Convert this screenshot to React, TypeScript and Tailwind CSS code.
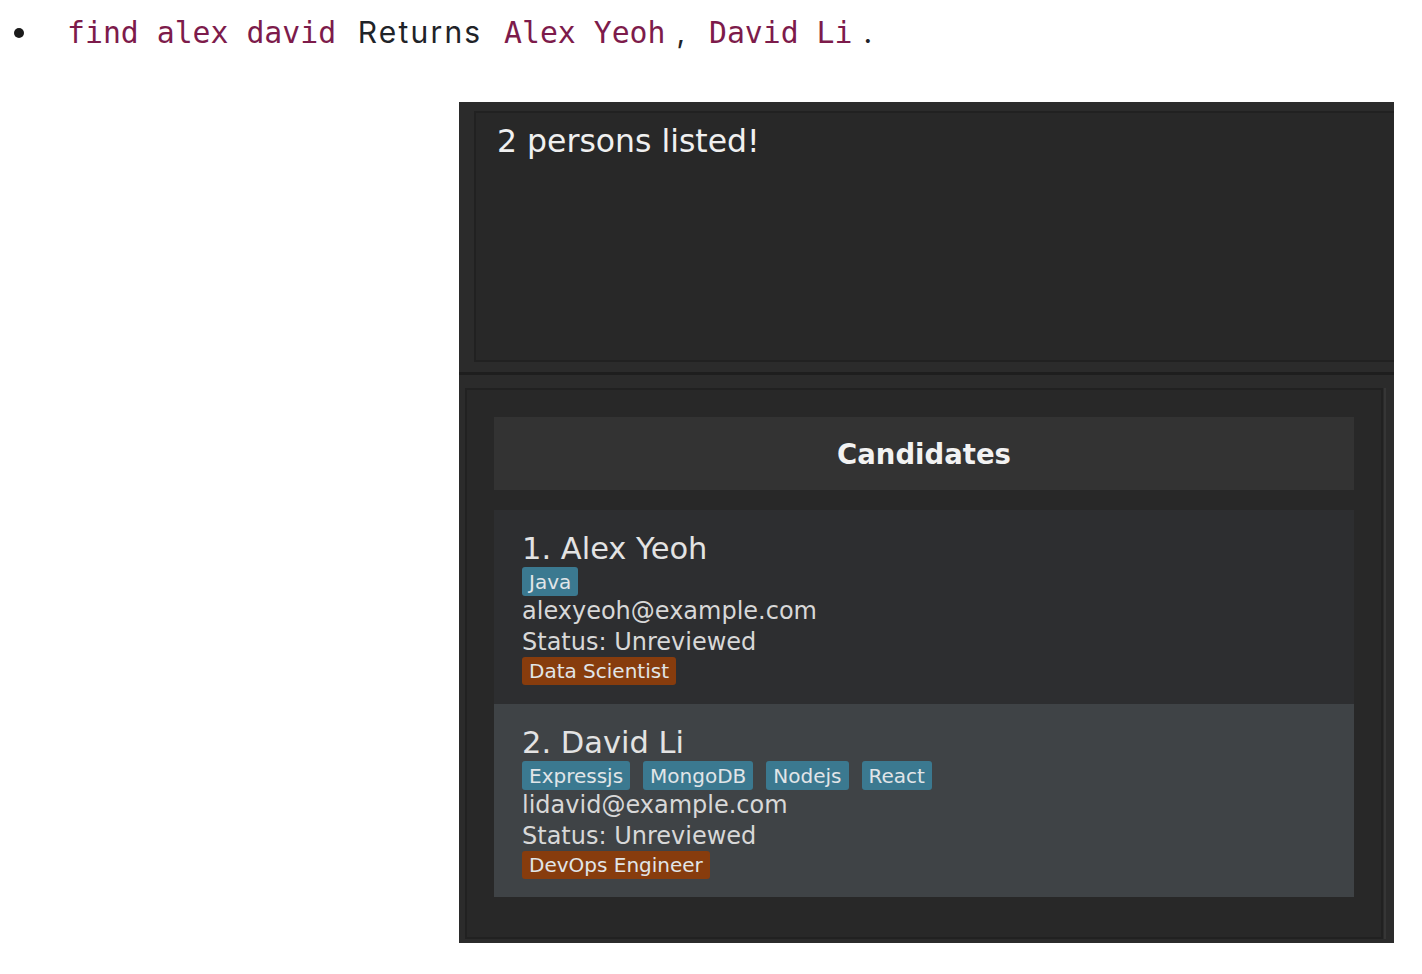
import React from "react";

const Tag = ({ children, orange }: { children: React.ReactNode; orange?: boolean }) => (
  <span
    className={
      "inline-flex items-center rounded-[3px] px-[7px] text-[20px] leading-none text-[#e1e5e8] " +
      (orange ? "bg-[#873c0d] h-[28px]" : "bg-[#3b7990] h-[29px]")
    }
  >
    {children}
  </span>
);

const Card = ({
  index,
  name,
  tags,
  email,
  role,
  bg,
  h,
}: {
  index: number;
  name: string;
  tags: string[];
  email: string;
  role: string;
  bg: string;
  h: string;
}) => (
  <div className={"flex flex-col pl-[28px] pt-[22px] " + bg + " " + h}>
    <div className="text-[30.5px] leading-[34px] text-[#e3e3e3]">
      {index}. {name}
    </div>
    <div className="mt-[1px] flex gap-[13px]">
      {tags.map((t) => (
        <Tag key={t}>{t}</Tag>
      ))}
    </div>
    <div className="text-[24px] leading-[31px] text-[#d8d8d8]">{email}</div>
    <div className="text-[24px] leading-[30px] text-[#d8d8d8]">Status: Unreviewed</div>
    <div className="flex">
      <Tag orange>{role}</Tag>
    </div>
  </div>
);

const mono = { fontFamily: "'DejaVu Sans Mono', 'Liberation Mono', monospace" };

export default function App() {
  return (
    <div className="relative h-[974px] w-[1422px] overflow-hidden bg-white">
      <div
        className="flex items-center pt-[12px]"
        style={{ fontFamily: "Inter, 'Liberation Sans', sans-serif" }}
      >
        <span className="ml-[14px] h-[10px] w-[10px] rounded-full bg-[#1a1a1a]" />
        <div className="ml-[32px] whitespace-pre text-[30px] leading-[40px] tracking-[2.2px] text-[#1f2328]">
          <code className="px-[11px] text-[29.8px] tracking-normal text-[#7d1b4b]" style={mono}>
            find alex david
          </code>{" "}
          Returns{" "}
          <code className="px-[11px] text-[29.8px] tracking-normal text-[#7d1b4b]" style={mono}>
            Alex Yeoh
          </code>
          ,{" "}
          <code className="px-[11px] text-[29.8px] tracking-normal text-[#7d1b4b]" style={mono}>
            David Li
          </code>
          .
        </div>
      </div>

      <div
        className="ml-[459px] mt-[49px] flex h-[841px] w-[935px] flex-col overflow-hidden bg-[#2b2b2b]"
        style={{ fontFamily: "'DejaVu Sans', 'Liberation Sans', sans-serif" }}
      >
        <div className="pl-[15px] pt-[9px]">
          <div className="h-[251px] w-[940px] border-2 border-[#212121] bg-[#282828] pl-[21px] pt-[9px]">
            <div className="text-[31.5px] leading-[38px] text-[#f0f0f0]">2 persons listed!</div>
          </div>
        </div>
        <div className="mt-[10px] h-[3px] w-full bg-[#1e1e1e]" />
        <div className="mt-[13px] flex pl-[6px]">
          <div className="flex h-[551px] w-[918px] flex-col border-2 border-[#212121] bg-[#282828] px-[27px] pt-[27px]">
            <div className="flex h-[73px] items-center justify-center bg-[#333333] pt-[3px]">
              <span className="text-[27.5px] font-bold text-[#f2f2f2]">Candidates</span>
            </div>
            <div className="mt-[20px] flex flex-col">
              <Card
                index={1}
                name="Alex Yeoh"
                tags={["Java"]}
                email="alexyeoh@example.com"
                role="Data Scientist"
                bg="bg-[#2d2e30]"
                h="h-[194px]"
              />
              <Card
                index={2}
                name="David Li"
                tags={["Expressjs", "MongoDB", "Nodejs", "React"]}
                email="lidavid@example.com"
                role="DevOps Engineer"
                bg="bg-[#3f4346]"
                h="h-[193px]"
              />
            </div>
          </div>
          <div className="ml-[1px] h-[551px] w-[2px] bg-[#363636]" />
        </div>
      </div>
    </div>
  );
}
